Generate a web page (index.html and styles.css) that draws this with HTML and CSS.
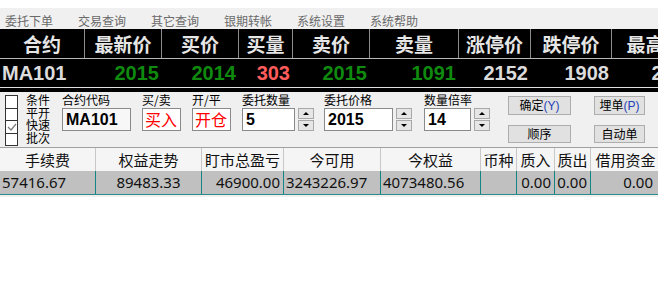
FILE: index.html
```html
<!DOCTYPE html>
<html lang="zh">

<head>
    <meta charset="UTF-8">
    <meta name="viewport" content="width=device-width, initial-scale=1.0">
    <title>委托下单</title>
    <link rel="stylesheet" href="styles.css">
</head>

<body>
    <div class="page">
        <div class="menu">
            <span>委托下单</span>
            <span>交易查询</span>
            <span>其它查询</span>
            <span>银期转帐</span>
            <span>系统设置</span>
            <span>系统帮助</span>
        </div>

        <div class="quote">
            <div class="qrow qhead">
                <div>合约</div>
                <div>最新价</div>
                <div>买价</div>
                <div>买量</div>
                <div>卖价</div>
                <div>卖量</div>
                <div>涨停价</div>
                <div>跌停价</div>
                <div>最高价</div>
            </div>
            <div class="qrow qdata">
                <div class="code">MA101</div>
                <div class="up">2015</div>
                <div class="up">2014</div>
                <div class="red">303</div>
                <div class="up">2015</div>
                <div class="up">1091</div>
                <div>2152</div>
                <div>1908</div>
                <div>2160</div>
            </div>
        </div>

        <div class="panel">
            <div class="checks">
                <div class="boxes">
                    <div class="box"></div>
                    <div class="box"></div>
                    <div class="box checked">
                        <svg width="10" height="10" viewBox="0 0 10 10"><path d="M1 5 L4 8 L9 2" fill="none" stroke="#7a7a7a" stroke-width="1.2"/></svg>
                    </div>
                    <div class="box"></div>
                </div>
                <div class="check-labels">
                    <div>条件</div>
                    <div>平开</div>
                    <div>快速</div>
                    <div>批次</div>
                </div>
            </div>

            <div class="field f-code">
                <div class="label">合约代码</div>
                <div class="input bold">MA101</div>
            </div>
            <div class="field f-side">
                <div class="label">买/卖</div>
                <div class="input redtext">买入</div>
            </div>
            <div class="field f-side">
                <div class="label">开/平</div>
                <div class="input redtext">开仓</div>
            </div>
            <div class="field f-qty">
                <div class="label">委托数量</div>
                <div class="spin-row">
                    <div class="input bold w-qty">5</div>
                    <div class="spinner">
                        <div class="arrow"><span class="tri-up"></span></div>
                        <div class="arrow"><span class="tri-down"></span></div>
                    </div>
                </div>
            </div>
            <div class="field f-price">
                <div class="label">委托价格</div>
                <div class="spin-row">
                    <div class="input bold w-price">2015</div>
                    <div class="spinner">
                        <div class="arrow"><span class="tri-up"></span></div>
                        <div class="arrow"><span class="tri-down"></span></div>
                    </div>
                </div>
            </div>
            <div class="field f-mult">
                <div class="label">数量倍率</div>
                <div class="spin-row">
                    <div class="input bold w-mult">14</div>
                    <div class="spinner">
                        <div class="arrow"><span class="tri-up"></span></div>
                        <div class="arrow"><span class="tri-down"></span></div>
                    </div>
                </div>
            </div>

            <div class="buttons">
                <button>确定<em>(Y)</em></button>
                <button>埋单<em>(P)</em></button>
                <button>顺序</button>
                <button>自动单</button>
            </div>
        </div>

        <div class="account">
            <div class="arow ahead">
                <div>手续费</div>
                <div>权益走势</div>
                <div>盯市总盈亏</div>
                <div>今可用</div>
                <div>今权益</div>
                <div>币种</div>
                <div>质入</div>
                <div>质出</div>
                <div>借用资金</div>
            </div>
            <div class="arow adata">
                <div class="left">57416.67</div>
                <div class="mid">89483.33</div>
                <div class="right">46900.00</div>
                <div class="left">3243226.97</div>
                <div class="left">4073480.56</div>
                <div></div>
                <div class="right">0.00</div>
                <div class="right">0.00</div>
                <div class="right">0.00</div>
            </div>
        </div>
    </div>
</body>

</html>
```

FILE: styles.css
```css
body {
    margin: 0;
    background: #fff;
    font-family: "Noto Sans", "Noto Sans CJK SC", sans-serif;
    overflow: hidden;
}

.page {
    width: 658px;
    padding-top: 8px;
    overflow: hidden;
}

/* menu */
.menu {
    display: flex;
    gap: 25px;
    height: 21px;
    box-sizing: border-box;
    padding: 6px 0 0 5px;
    background: #f0f0f0;
    font-family: "Noto Sans CJK SC", sans-serif;
    font-size: 12px;
    line-height: 14px;
    color: #6a6a6a;
}

/* quote board */
.quote {
    width: 720px;
    background: #000;
    padding-bottom: 3px;
    border-bottom: 1px solid #000;
}

.qrow {
    display: grid;
    grid-template-columns: 85px 77px 77px 54px 77px 89px 72px 81px 87px;
}

.qhead {
    height: 29px;
    border-bottom: 1px solid #b8b8b8;
    margin-bottom: 1px;
}

.qhead div {
    border-right: 1px solid #8c8c8c;
    text-align: center;
    font-family: "Noto Sans CJK SC", sans-serif;
    font-weight: bold;
    font-size: 19px;
    line-height: 29px;
    color: #e6e6e6;
}

.qdata {
    height: 27px;
    border-bottom: 1px solid #e0e0e0;
}

.qdata div {
    text-align: right;
    padding-right: 3px;
    font-family: "Liberation Sans", sans-serif;
    font-weight: bold;
    font-size: 20px;
    line-height: 27px;
    color: #dcdcdc;
}

.qdata .code {
    text-align: left;
    padding-left: 2px;
}

.qdata .up {
    color: #0f8a0f;
}

.qdata .red {
    color: #ff5c5c;
}

/* order panel */
.panel {
    display: flex;
    align-items: flex-start;
    height: 56px;
    box-sizing: border-box;
    padding-top: 1px;
    background: #f0f0f0;
    border-bottom: 1px solid #a0a0a0;
    font-family: "Noto Sans CJK SC", sans-serif;
    font-size: 12px;
    color: #000;
}

.checks {
    display: flex;
    width: 45px;
    margin: 2px 0 0 5px;
}

.boxes {
    width: 11px;
    border: 1px solid #333;
    background: #fff;
}

.box {
    height: 11.5px;
    border-top: 1px solid #333;
    display: flex;
    align-items: center;
    justify-content: center;
}

.box:first-child {
    border-top: none;
}

.check-labels {
    margin-left: 8px;
    line-height: 12.5px;
    margin-top: -1px;
    font-family: "Noto Sans CJK SC", sans-serif;
}

.label {
    height: 15px;
    line-height: 14px;
}

.input {
    height: 23px;
    box-sizing: border-box;
    border: 1px solid #8a8a8a;
    background: #fff;
    padding-left: 3px;
    line-height: 21px;
}

.f-code {
    margin-left: 12px;
}

.f-code .input {
    width: 69px;
    background: #f7f7f7;
}

.f-side {
    margin-left: 11px;
}

.f-side .input {
    width: 39px;
    padding-left: 2px;
}

.bold {
    font-family: "Liberation Sans", sans-serif;
    font-weight: bold;
    font-size: 16px;
    color: #000;
}

.redtext {
    font-family: "Noto Sans CJK SC", sans-serif;
    color: #ff0000;
    font-size: 16px;
}

.spin-row {
    display: flex;
    gap: 3px;
}

.w-qty {
    width: 53px;
}

.w-price {
    width: 69px;
}

.w-mult {
    width: 47px;
}

.f-qty {
    margin-left: 11px;
}

.f-price {
    margin-left: 10px;
}

.f-mult {
    margin-left: 12px;
}

.spinner {
    display: flex;
    flex-direction: column;
    gap: 1px;
}

.arrow {
    width: 16px;
    height: 11px;
    box-sizing: border-box;
    border: 1px solid #a8a8a8;
    background: #e6e6e6;
    display: flex;
    align-items: center;
    justify-content: center;
}

.tri-up,
.tri-down {
    width: 0;
    height: 0;
    border-left: 3px solid transparent;
    border-right: 3px solid transparent;
}

.tri-up {
    border-bottom: 3px solid #000;
}

.tri-down {
    border-top: 3px solid #000;
}

.buttons {
    display: grid;
    grid-template-columns: 63px 51px;
    grid-template-rows: 19px 18px;
    column-gap: 23px;
    row-gap: 10px;
    margin: 3px 0 0 18px;
}

button {
    margin: 0;
    padding: 0;
    border: 1px solid #adadad;
    background: #e1e1e1;
    font-family: "Noto Sans CJK SC", sans-serif;
    font-size: 12px;
    line-height: 16px;
    color: #000;
}

button em {
    font-style: normal;
    font-family: "Liberation Sans", sans-serif;
    color: #1f3fb8;
}

/* account table */
.account {
    width: 700px;
    background: #f0f0f0;
    padding-bottom: 2px;
}

.arow {
    display: grid;
    grid-template-columns: 96px 106px 82px 97px 100px 36px 38px 36px 70px;
    font-size: 15px;
}

.ahead {
    height: 23px;
    background: #f5f5f5;
}

.ahead div {
    border-right: 1px solid #c8c8c8;
    text-align: center;
    font-family: "Noto Sans CJK SC", sans-serif;
    line-height: 23px;
    color: #111;
    white-space: nowrap;
}

.adata {
    height: 23px;
    background: #c0c0c0;
    border-bottom: 1px solid #2a8a8a;
}

.adata div {
    border-right: 1px solid #138585;
    line-height: 23px;
    color: #111;
    white-space: nowrap;
    overflow: hidden;
}

.adata .left {
    text-align: left;
    padding-left: 2px;
}

.adata .mid {
    text-align: center;
}

.adata .right {
    text-align: right;
    padding-right: 3px;
}

.adata div:last-child {
    padding-right: 7px;
}
```
